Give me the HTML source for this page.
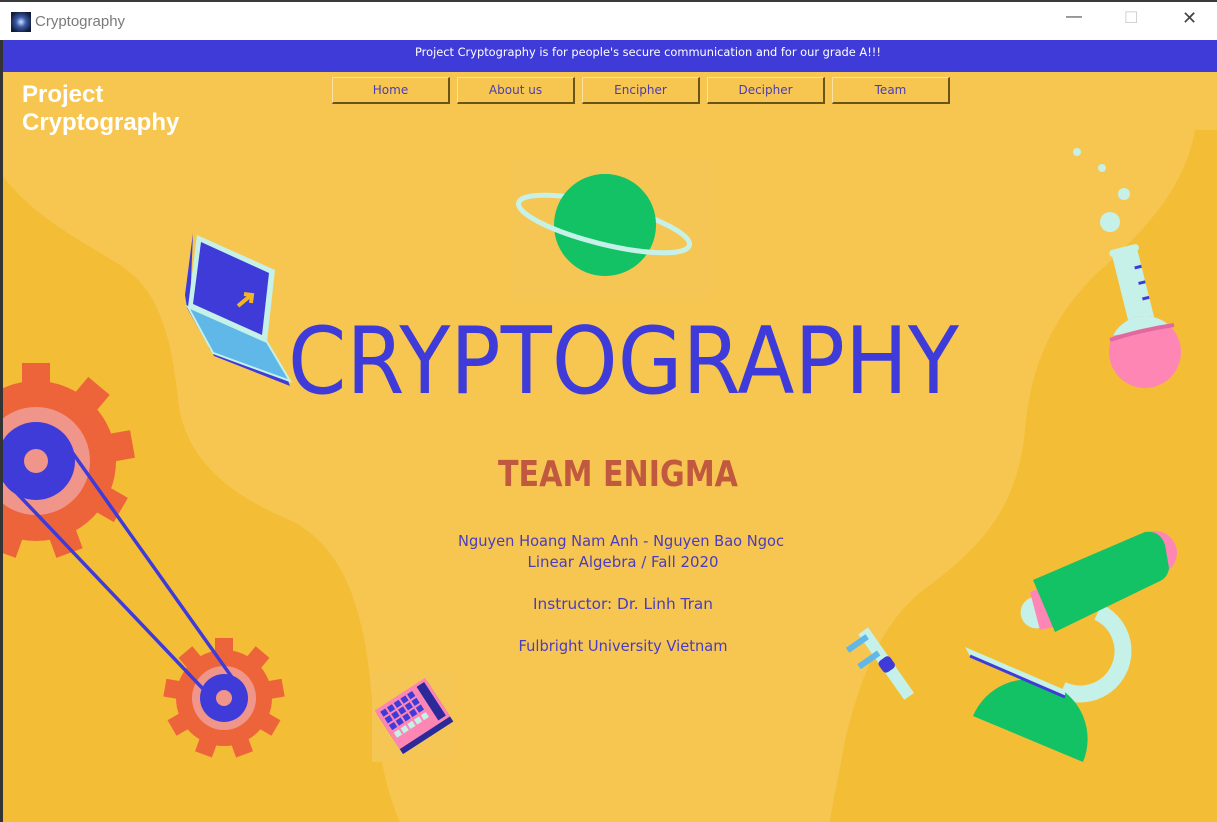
<!DOCTYPE html>
<html><head><meta charset="utf-8"><style>
html,body{margin:0;padding:0;width:1217px;height:822px;overflow:hidden;background:#fff;font-family:"Liberation Sans",sans-serif}
.tb{position:absolute;left:0;top:0;width:1217px;height:40px;background:#fff;border-top:2px solid #3a3a3a;box-sizing:border-box}
.tb .t{position:absolute;left:35px;top:11px;font-size:15px;color:#7a7a7a}
.ico{position:absolute;left:11px;top:10px;width:20px;height:20px;background:radial-gradient(circle,#cfe2ff 0,#3a5aa8 35%,#101a3a 80%)}
.ctl{position:absolute;top:6px;font-size:16px;color:#444}
.bar{position:absolute;left:3px;top:40px;width:1214px;height:32px;background:#3f3bd9;color:#fff;font-size:11.4px;line-height:25px;font-family:"DejaVu Sans",sans-serif}
.bar span{position:absolute;left:412px;top:0;white-space:nowrap}
.bl{position:absolute;left:0;top:40px;width:3px;height:782px;background:#333}
.btn{position:absolute;top:77px;width:118px;height:27px;box-sizing:border-box;background:#f7c651;border-top:1px solid #fbe3a5;border-left:1px solid #fbe3a5;border-right:2px solid #6a5418;border-bottom:2px solid #6a5418;color:#4a3cb8;font-family:"DejaVu Sans",sans-serif;font-size:12px;text-align:center;line-height:24px}
.proj{position:absolute;left:22px;top:81px;color:#fff;font-weight:bold;font-size:24px;line-height:28px;font-family:"Liberation Sans",sans-serif}
</style></head><body>
<svg style="position:absolute;left:0;top:0" width="1217" height="822">
<defs>
<clipPath id="top"><rect x="540" y="160" width="130" height="52" transform="rotate(14 604 224)"/></clipPath>
<clipPath id="ftop"><path d="M1100 300 L1190 300 L1190 322 L1100 338 Z"/></clipPath>
</defs>
<rect x="0" y="72" width="1217" height="750" fill="#f7c651"/>
<path d="M0 172 C30 215 80 240 120 265 C160 290 172 340 178 400 C185 460 230 495 290 520 C340 545 362 600 370 680 C378 760 390 800 400 822 L0 822 Z" fill="#f3be36"/>
<path d="M1217 130 L1195 130 C1185 190 1140 235 1095 275 C1050 320 1030 370 1025 430 C1018 500 990 540 930 585 C880 620 860 680 845 740 C838 780 832 805 830 822 L1217 822 Z" fill="#f3be36"/>
<rect x="510" y="160" width="205" height="140" fill="#f6c655"/>
<rect x="372" y="672" width="84" height="90" fill="#f6c655"/>
<circle cx="605" cy="225" r="51" fill="#12c264"/>
<ellipse cx="604" cy="224" rx="88" ry="20" transform="rotate(14 604 224)" fill="none" stroke="#c5f1e8" stroke-width="5"/>
<circle cx="605" cy="225" r="51" fill="#12c264" clip-path="url(#top)"/>
<path d="M193 233 L185 295 L187 308 L214 356 L290 386 L287 378 L210 350 L190 306 Z" fill="#3f3bd9"/>
<path d="M197 235 L275 270 L267 342 L188 307 Z" fill="#c5f1e8"/>
<path d="M201 242 L269 273 L262 335 L193 304 Z" fill="#3f3bd9"/>
<path d="M188 307 L267 342 L290 381 L213 353 Z" fill="#5fb8e8" stroke="#c5f1e8" stroke-width="2"/>
<path d="M238 306 L250 296 M244 294 L252 295 L251 303" stroke="#f2b61f" stroke-width="4" fill="none"/>
<g transform="translate(36 461)">
<circle r="80" fill="#ee643a"/>
<g fill="#ee643a"><rect x="-14" y="-98" width="28" height="30"/><rect x="-14" y="-98" width="28" height="30" transform="rotate(40)"/><rect x="-14" y="-98" width="28" height="30" transform="rotate(80)"/><rect x="-14" y="-98" width="28" height="30" transform="rotate(120)"/><rect x="-14" y="-98" width="28" height="30" transform="rotate(160)"/><rect x="-14" y="-98" width="28" height="30" transform="rotate(200)"/><rect x="-14" y="-98" width="28" height="30" transform="rotate(240)"/><rect x="-14" y="-98" width="28" height="30" transform="rotate(280)"/><rect x="-14" y="-98" width="28" height="30" transform="rotate(320)"/></g>
<circle r="54" fill="#f0958a"/><circle r="39" fill="#3f3bd9"/><circle r="12" fill="#f0958a"/>
</g>
<g transform="translate(224 698)">
<circle r="48" fill="#ee643a"/>
<g fill="#ee643a"><rect x="-9" y="-60" width="18" height="20"/><rect x="-9" y="-60" width="18" height="20" transform="rotate(40)"/><rect x="-9" y="-60" width="18" height="20" transform="rotate(80)"/><rect x="-9" y="-60" width="18" height="20" transform="rotate(120)"/><rect x="-9" y="-60" width="18" height="20" transform="rotate(160)"/><rect x="-9" y="-60" width="18" height="20" transform="rotate(200)"/><rect x="-9" y="-60" width="18" height="20" transform="rotate(240)"/><rect x="-9" y="-60" width="18" height="20" transform="rotate(280)"/><rect x="-9" y="-60" width="18" height="20" transform="rotate(320)"/></g>
<circle r="32" fill="#f0958a"/><circle r="24" fill="#3f3bd9"/><circle r="8" fill="#f0958a"/>
</g>
<path d="M12 488 L206 692 M72 452 L236 683" stroke="#3f3bd9" stroke-width="3.5"/>
<g transform="translate(414 716) rotate(-33)">
<rect x="-30" y="-22" width="60" height="48" fill="#2c2a9a"/>
<rect x="-30" y="-26" width="60" height="46" fill="#fd86b5"/>
<rect x="18" y="-23" width="9" height="40" fill="#2c2a9a"/>
<g fill="#3f3bd9">
<rect x="-26" y="-22" width="6" height="6"/><rect x="-18" y="-22" width="6" height="6"/><rect x="-10" y="-22" width="6" height="6"/><rect x="-2" y="-22" width="6" height="6"/><rect x="6" y="-22" width="6" height="6"/>
<rect x="-26" y="-14" width="6" height="6"/><rect x="-18" y="-14" width="6" height="6"/><rect x="-10" y="-14" width="6" height="6"/><rect x="-2" y="-14" width="6" height="6"/><rect x="6" y="-14" width="6" height="6"/>
<rect x="-26" y="-6" width="6" height="6"/><rect x="-18" y="-6" width="6" height="6"/><rect x="-10" y="-6" width="6" height="6"/><rect x="-2" y="-6" width="6" height="6"/><rect x="6" y="-6" width="6" height="6"/>
</g>
<g fill="#c5f1e8"><rect x="-26" y="3" width="6" height="6"/><rect x="-18" y="3" width="6" height="6"/><rect x="-10" y="3" width="6" height="6"/><rect x="-2" y="3" width="6" height="6"/><rect x="6" y="3" width="6" height="6"/></g>
</g>
<g transform="translate(885 662) rotate(-35)">
<rect x="-6" y="-38" width="12" height="80" fill="#c5f1e8"/>
<rect x="-24" y="-34" width="24" height="6" fill="#5fb8e8"/>
<rect x="-24" y="-14" width="24" height="6" fill="#5fb8e8"/>
<rect x="-7" y="-4" width="14" height="14" rx="4" fill="#3f3bd9"/>
</g>
<g fill="#c5f1e8"><circle cx="1077" cy="152" r="4"/><circle cx="1102" cy="168" r="4"/><circle cx="1124" cy="194" r="6"/><circle cx="1110" cy="222" r="10"/></g>
<g transform="translate(1124 250) rotate(-14)"><rect x="-13" y="0" width="26" height="80" fill="#c5f1e8"/><rect x="-15" y="-3" width="30" height="7" rx="3" fill="#c5f1e8"/>
<path d="M6 20 L13 20 M6 36 L13 36 M6 52 L13 52" stroke="#3f3bd9" stroke-width="3"/></g>
<circle cx="1145" cy="352" r="36" fill="#fd86b5"/>
<circle cx="1145" cy="352" r="36" fill="#c5f1e8" clip-path="url(#ftop)"/>
<path d="M1110 340 Q1140 330 1174 325" stroke="#e06aa0" stroke-width="4" fill="none"/>
<path d="M1098 612 A40 40 0 1 1 1062 690" fill="none" stroke="#c5f1e8" stroke-width="17"/>
<path d="M1033 597 A14 14 0 0 0 1040 628 Z" fill="#c5f1e8"/>
<path d="M1030 592 L1046 586 L1058 626 L1040 630 Z" fill="#fd86b5"/>
<circle cx="1155" cy="553" r="22" fill="#fd86b5"/>
<path d="M1033 580 L1145 532 Q1160 530 1165 545 L1169 568 Q1168 578 1158 582 L1055 632 Z" fill="#12c264"/>
<path d="M973 716 A58 58 0 0 1 1083 762 Z" fill="#12c264"/>
<path d="M965 647 L1065 690 L1065 697 L970 656 Z" fill="#c5f1e8"/>
<path d="M970 656 L1065 697" stroke="#3f3bd9" stroke-width="3"/>
<text x="288" y="393" textLength="671" lengthAdjust="spacingAndGlyphs" font-family="DejaVu Sans,sans-serif" font-size="93" fill="#3f3bd9">CRYPTOGRAPHY</text>
<text x="498" y="486" textLength="240" lengthAdjust="spacingAndGlyphs" font-family="DejaVu Sans,sans-serif" font-weight="bold" font-size="36" fill="#c0593f">TEAM ENIGMA</text>
<g font-family="DejaVu Sans,sans-serif" font-size="15" fill="#4a3cc0" text-anchor="middle">
<text x="621" y="546" textLength="326" lengthAdjust="spacingAndGlyphs">Nguyen Hoang Nam Anh - Nguyen Bao Ngoc</text>
<text x="623" y="567" textLength="191" lengthAdjust="spacingAndGlyphs">Linear Algebra / Fall 2020</text>
<text x="623" y="609" textLength="180" lengthAdjust="spacingAndGlyphs">Instructor: Dr. Linh Tran</text>
<text x="623" y="651" textLength="209" lengthAdjust="spacingAndGlyphs">Fulbright University Vietnam</text>
</g>
</svg>
<div class="tb"><div class="ico"></div><div class="t">Cryptography</div>
<div class="ctl" style="left:1066px">&#8212;</div><div class="ctl" style="left:1124px;color:#ccc">&#9744;</div><div class="ctl" style="left:1182px;font-size:18px">&#10005;</div></div>
<div class="bl"></div>
<div class="bar"><span>Project Cryptography is for people's secure communication and for our grade A!!!</span></div>
<div class="proj">Project<br>Cryptography</div>
<div class="btn" style="left:332px">Home</div>
<div class="btn" style="left:457px">About us</div>
<div class="btn" style="left:582px">Encipher</div>
<div class="btn" style="left:707px">Decipher</div>
<div class="btn" style="left:832px">Team</div>
</body></html>
